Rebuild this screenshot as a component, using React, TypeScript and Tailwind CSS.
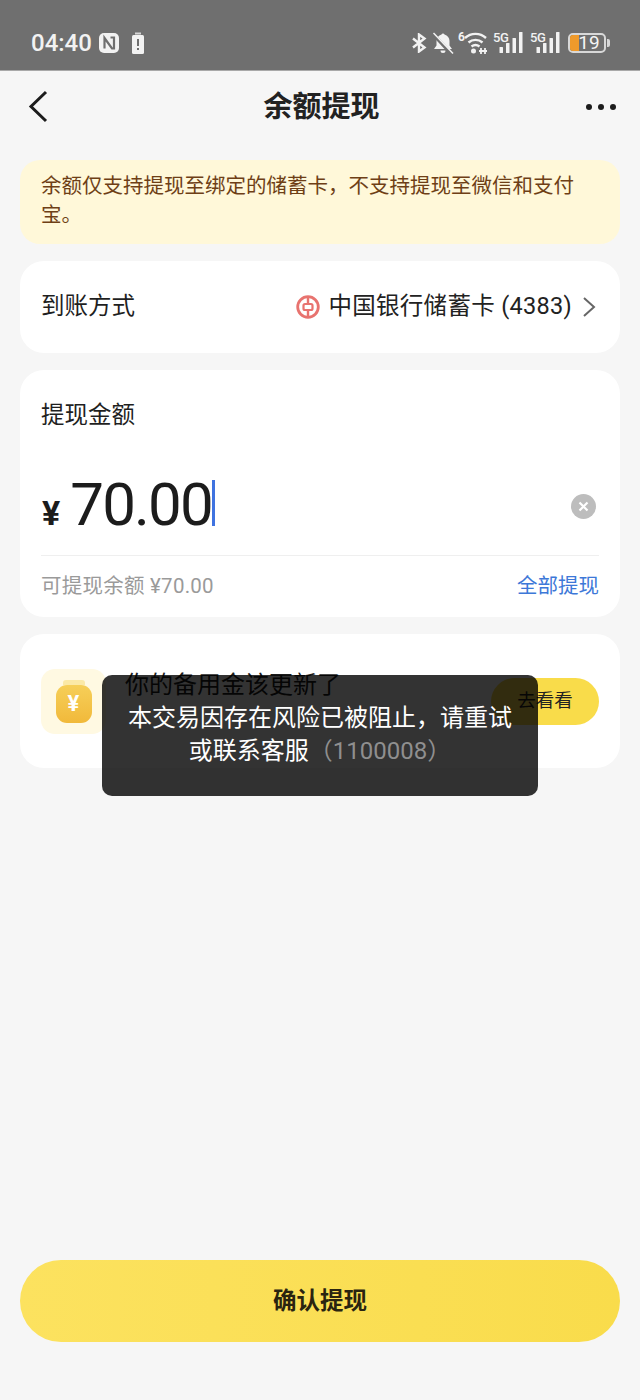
import React from "react";

const cjk = "font-['Roboto','Noto_Sans_CJK_SC',sans-serif]";

const Signal = () => (
  <div className="relative w-[30px] h-[22px]">
    <span className="absolute left-0 top-[-1px] text-[13px] leading-[14px] font-medium text-[#f2f2f2] tracking-[-0.5px]">5G</span>
    <svg width="30" height="22" viewBox="0 0 30 22" className="absolute left-0 top-0">
      <g fill="#f2f2f2">
        <rect x="6.500" y="15" width="3.500" height="6" rx="0.500" />
        <rect x="13" y="11" width="3.500" height="10" rx="0.500" />
        <rect x="19.500" y="6" width="3.500" height="15" rx="0.500" />
        <rect x="26" y="0" width="3.500" height="21" rx="0.500" />
      </g>
    </svg>
  </div>
);

const StatusBar = () => (
  <div className="h-[71px] shrink-0 bg-[#6f6f6f] border-b border-[#a9a9a9] pt-[30px] pl-[31px] pr-[30px] flex justify-between items-start">
    <div className="flex items-center h-[26px]">
      <span className="text-[24px] leading-[26px] font-medium text-[#f2f2f2]">04:40</span>
      {/* NFC */}
      <svg width="22" height="22" viewBox="0 0 22 22" className="ml-[6px]">
        <rect x="1" y="1" width="20" height="20" rx="5" fill="#f2f2f2" />
        <path d="M6.500 16.500V6L14 16.500H16V5.500H12.500" fill="none" stroke="#6f6f6f" strokeWidth="2.200" />
      </svg>
      {/* battery alert */}
      <svg width="14" height="23" viewBox="0 0 14 23" className="ml-[11px]">
        <rect x="4" y="0.500" width="6" height="2" fill="#d5d5d5" />
        <rect x="1" y="3" width="12" height="19" rx="1.500" fill="#f2f2f2" />
        <rect x="6" y="7" width="2" height="7" fill="#6f6f6f" />
        <rect x="6" y="16" width="2" height="2" fill="#6f6f6f" />
      </svg>
    </div>
    <div className="flex items-center h-[28px] mt-[-1px]">
      {/* bluetooth */}
      <svg width="16" height="20" viewBox="0 0 16 20" fill="none" stroke="#f2f2f2" strokeWidth="2.400">
        <path d="M2 5.500 13.500 14.500 8 18.500V1.500L13.500 5.500 2 14.500" />
      </svg>
      {/* muted bell */}
      <svg width="22" height="23" viewBox="0 0 22 23" className="ml-[5px]" fill="#f2f2f2">
        <path d="M9.500 2.500a1.600 1.600 0 0 1 3 0c3 .9 5 3.500 5 6.500v4.500l2.500 3.500H2l2.500-3.500V9c0-3 2-5.500 5-6.500Z" />
        <path d="M8.500 18.500h5a2.500 2.500 0 0 1-5 0Z" />
        <path d="M0 1 19.500 22" stroke="#6f6f6f" strokeWidth="3.500" />
        <path d="M1.500 1 21 21.500" stroke="#f2f2f2" strokeWidth="1.500" />
      </svg>
      {/* wifi */}
      <svg width="30" height="24" viewBox="0 0 30 24" className="ml-[4px]" fill="none">
        <text x="0" y="10" fontSize="12" fontWeight="700" fill="#f2f2f2" fontFamily="Roboto">6</text>
        <path d="M7 7C13 1.500 22 1.500 28 7M10.500 11.500c4-3.500 10-3.500 14 0M13.500 15.500c2.500-2 5.500-2 8 0" stroke="#f2f2f2" strokeWidth="2.400" />
        <circle cx="15.500" cy="20" r="2.500" fill="#f2f2f2" />
        <path d="M21 20h8M23 17v6M27 17v6" stroke="#f2f2f2" strokeWidth="1.800" />
      </svg>
      <div className="ml-[5px]"><Signal /></div>
      <div className="ml-[7px]"><Signal /></div>
      {/* battery */}
      <div className="ml-[8px] flex items-center">
        <div className="relative w-[38px] h-[20px] rounded-[5px] border-2 border-[#d8d8d8]">
          <div className="absolute left-0 top-0 bottom-0 w-[9px] rounded-l-[3px] bg-[#ef9a2b]" />
          <span className="absolute inset-0 pl-[4px] text-center text-[19px] leading-[16px] text-[#f5f5f5]">19</span>
        </div>
        <div className="w-[3px] h-[8px] ml-[1px] bg-[#d8d8d8] rounded-r-[2px]" />
      </div>
    </div>
  </div>
);

const BankIcon = () => (
  <svg width="24" height="24" viewBox="0 0 24 24" fill="none" stroke="#e8736f">
    <circle cx="12" cy="12" r="10.300" strokeWidth="2.800" />
    <rect x="7.500" y="9" width="9" height="6" rx="1.500" strokeWidth="2.200" />
    <path d="M12 3v6M12 15v6" strokeWidth="2.400" />
  </svg>
);

export default function App() {
  return (
    <div className={`relative w-[640px] h-[1400px] bg-[#f6f6f6] flex flex-col overflow-hidden ${cjk}`}>
      <StatusBar />

      {/* header */}
      <div className="relative h-[72px] shrink-0 flex items-center justify-between pl-[27px] pr-[24px]">
        <div className="w-[30px]">
          <svg width="22" height="34" viewBox="0 0 22 34" fill="none" stroke="#1c1c1c" strokeWidth="3" className="mt-[-2px] ml-[1px]">
            <path d="M18 3 3 17.500 18 32" />
          </svg>
        </div>
        <h1 className="text-[29px] leading-[36px] font-bold text-[#222] mt-[-1px]">余额提现</h1>
        <div className="flex gap-[6px] w-[30px]">
          <span className="w-[6px] h-[6px] rounded-full bg-[#1c1c1c]" />
          <span className="w-[6px] h-[6px] rounded-full bg-[#1c1c1c]" />
          <span className="w-[6px] h-[6px] rounded-full bg-[#1c1c1c]" />
        </div>
      </div>

      <div className="flex flex-col gap-[17px] px-[20px] mt-[17px]">
        {/* notice */}
        <div className="h-[84px] rounded-[20px] bg-[#fff8d9] px-[21px] pt-[12px] text-[20.500px] leading-[29px] text-[#6e3f16]">
          余额仅支持提现至绑定的储蓄卡，不支持提现至微信和支付宝。
        </div>

        {/* payout method */}
        <div className="h-[92px] rounded-[24px] bg-white pl-[21px] pr-[24px] flex items-center justify-between">
          <span className="text-[23.500px] text-[#1f1f1f] mt-[-1px]">到账方式</span>
          <div className="flex items-center">
            <BankIcon />
            <span className="ml-[8px] text-[23.500px] tracking-[0.300px] text-[#222] mt-[-1px]">中国银行储蓄卡 (4383)</span>
            <svg width="14" height="24" viewBox="0 0 14 24" fill="none" stroke="#666" strokeWidth="2" className="ml-[10px]">
              <path d="M2 3 12 12 2 21" />
            </svg>
          </div>
        </div>

        {/* amount */}
        <div className="h-[247px] rounded-[24px] bg-white px-[21px] pt-[27px]">
          <div className="text-[23.500px] leading-[36px] text-[#1f1f1f]">提现金额</div>
          <div className="mt-[38px] h-[71px] flex items-center">
            <span className="ml-[1px] text-[34px] font-bold leading-none text-[#1c1c1c] mt-[12px]">¥</span>
            <span className="ml-[10px] mb-[4px] text-[60px] leading-[72px] tracking-[-1.800px] text-[#1c1c1c] font-['Roboto',sans-serif]">70.00</span>
            <span className="w-[3px] h-[46px] mb-[7px] bg-[#3f73e0]" />
            <span className="ml-auto mr-[3px] w-[25px] h-[25px] rounded-full bg-[#bdbdbd] flex items-center justify-center">
              <svg width="11" height="11" viewBox="0 0 11 11" stroke="#fff" strokeWidth="2.200">
                <path d="M1.500 1.500 9.500 9.500M9.500 1.500 1.500 9.500" />
              </svg>
            </span>
          </div>
          <div className="mt-[13px] h-px bg-[#efefef]" />
          <div className="mt-[12px] flex items-center justify-between text-[20.500px] leading-[36px]">
            <span className="text-[#9a9a9a] tracking-[0.250px]">可提现余额 ¥70.00</span>
            <span className="text-[#3d78d8]">全部提现</span>
          </div>
        </div>

        {/* reserve promo */}
        <div className="h-[134px] rounded-[24px] bg-white pl-[21px] pr-[21px] pt-[35px] flex items-start">
          <div className="w-[65px] h-[65px] rounded-[14px] bg-[#fff9e2] flex items-center justify-center">
            <div className="relative w-[36px] h-[38px] mt-[4px] rounded-[11px] bg-gradient-to-b from-[#f6cf58] to-[#f1b93a] flex items-center justify-center">
              <div className="absolute top-[-5px] left-[7px] right-[7px] h-[5px] rounded-t-[3px] bg-[#fbe9a6]" />
              <span className="text-[22px] font-bold leading-none text-white">¥</span>
            </div>
          </div>
          <span className="ml-[19px] text-[24px] leading-[32px] text-[#1c1c1c]">你的备用金该更新了</span>
          <div className="ml-auto mt-[9px] w-[108px] h-[47px] rounded-full bg-[#f9dc4a] flex items-center justify-center text-[18.500px] text-[#222]">
            去看看
          </div>
        </div>
      </div>

      {/* confirm */}
      <div className="mt-auto mb-[58px] mx-[20px] h-[82px] pt-[2px] rounded-full bg-gradient-to-r from-[#fce25f] to-[#f9dc4b] flex items-center justify-center text-[23.500px] font-bold text-[#2a2410]">
        确认提现
      </div>

      {/* toast */}
      <div className="absolute left-[102px] top-[675px] w-[436px] h-[121px] rounded-[10px] bg-black/80 pt-[27px] text-center text-[24px] leading-[33px] text-white">
        <div>本交易因存在风险已被阻止，请重试</div>
        <div>或联系客服<span className="text-[#8f8f8f]">（1100008）</span></div>
      </div>
    </div>
  );
}
